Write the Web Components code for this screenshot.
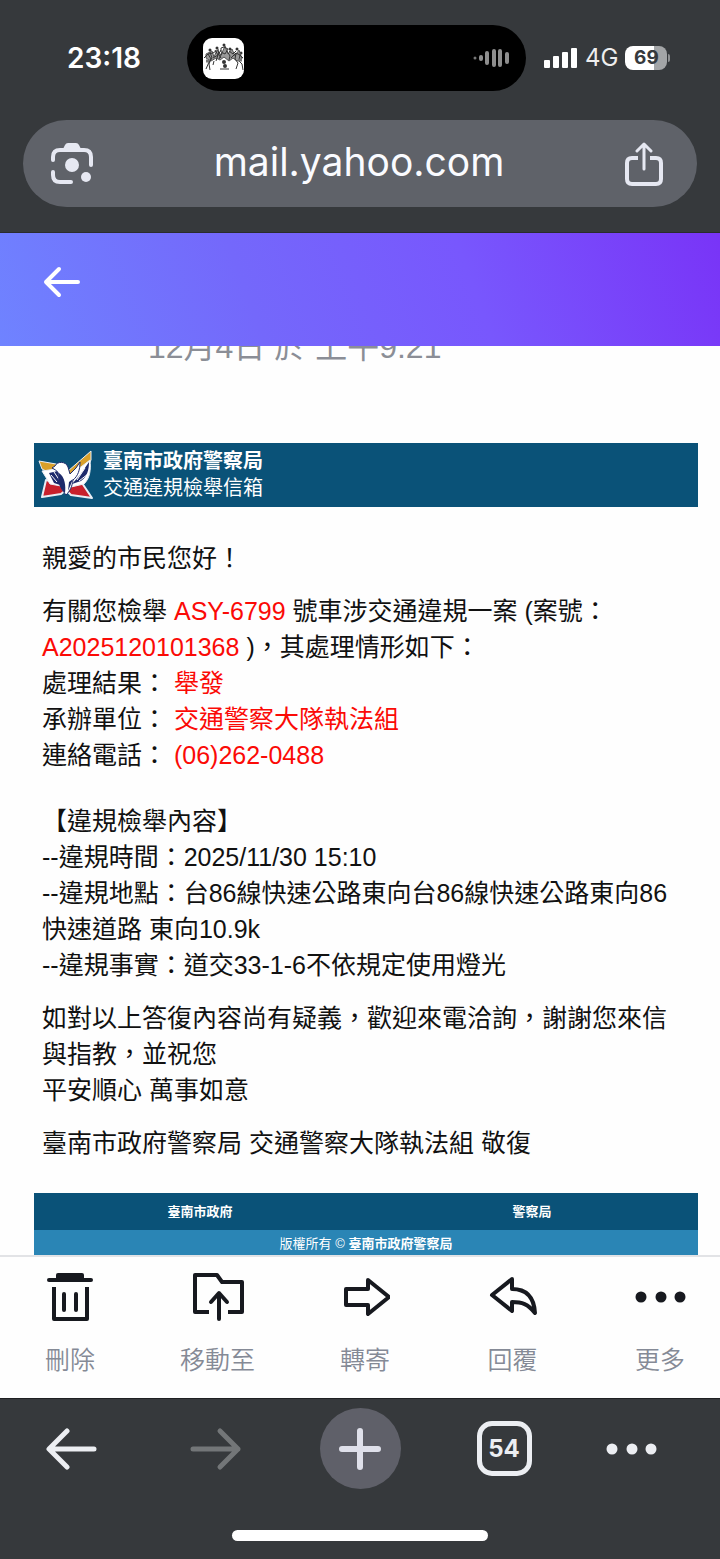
<!DOCTYPE html>
<html lang="zh-Hant">
<head>
<meta charset="utf-8">
<meta name="viewport" content="width=device-width, initial-scale=1">
<title>mail.yahoo.com</title>
<style>
  body {
    margin: 0;
    min-height: 100vh;
    background: #fff;
    font-family: "Liberation Sans", "Noto Sans CJK TC", sans-serif;
  }
</style>
</head>
<body>
<phone-screen>
  <status-bar slot="top" time="23:18" network="4G" battery="69"></status-bar>
  <address-bar slot="top" url="mail.yahoo.com"></address-bar>
  <mail-header slot="top"></mail-header>

  <mail-message date="12月4日 於 上午9:21">
    <letter-head slot="head">
      臺南市政府警察局
      <span slot="sub">交通違規檢舉信箱</span>
    </letter-head>
    <case-report></case-report>
    <letter-foot slot="foot"></letter-foot>
  </mail-message>

  <mail-toolbar slot="bottom">
    <mail-action icon="trash">刪除</mail-action>
    <mail-action icon="move">移動至</mail-action>
    <mail-action icon="forward">轉寄</mail-action>
    <mail-action icon="reply">回覆</mail-action>
    <mail-action icon="more">更多</mail-action>
  </mail-toolbar>
  <browser-toolbar slot="bottom" tabs="54"></browser-toolbar>
</phone-screen>

<script>
// 共用的圖示
const ICONS = {
  lens: `<svg width="42" height="42" viewBox="0 0 42 42" fill="none" stroke="currentColor" stroke-width="4" stroke-linecap="round">
    <path d="M2 17v-3q0-7 7-7h24q7 0 7 7v8M2 29v3q0 7 7 7h11"/>
    <path d="M12 6l2-4q1-2 3-2h8q2 0 3 2l2 4v2H12z" fill="currentColor" stroke="none"/>
    <circle cx="21" cy="22" r="7" fill="currentColor" stroke="none"/>
    <circle cx="35" cy="34" r="5" fill="currentColor" stroke="none"/></svg>`,
  share: `<svg width="38" height="44" viewBox="0 0 38 44" fill="none" stroke="currentColor" stroke-width="4" stroke-linecap="round" stroke-linejoin="round">
    <path d="M13 16H7q-5 0-5 5v16q0 5 5 5h24q5 0 5-5V21q0-5-5-5h-6" stroke-linecap="butt"/>
    <path d="M19 27V3M12 9l7-7 7 7" stroke-width="3"/></svg>`,
  back: `<svg width="38" height="32" viewBox="0 0 38 32" fill="none" stroke="currentColor" stroke-width="4" stroke-linecap="round" stroke-linejoin="round">
    <path d="M35 16H3M16 3L3 16l13 13"/></svg>`,
  trash: `<svg width="48" height="52" viewBox="0 0 48 52" fill="none" stroke="currentColor" stroke-width="4" stroke-linecap="round">
    <path d="M3 9h42"/><path d="M10 9V4q0-2 2-2h24q2 0 2 2v5z" fill="currentColor" stroke="none"/>
    <path d="M8 16v32h33V16" stroke-linecap="butt" stroke-linejoin="round"/><path d="M18 23v16M30 23v16"/></svg>`,
  move: `<svg width="54" height="52" viewBox="0 0 54 52" fill="none" stroke="currentColor" stroke-width="4" stroke-linecap="round" stroke-linejoin="round">
    <path d="M18 41H4V4h22l5 7h20v30H37" stroke-linecap="butt"/><path d="M28 48V24M20 31l8-9 8 9"/></svg>`,
  forward: `<svg width="50" height="52" viewBox="0 0 50 52" fill="none" stroke="currentColor" stroke-width="4" stroke-linejoin="round">
    <path d="M6 18h22V9l21 17-21 17v-9H6z"/></svg>`,
  reply: `<svg width="50" height="52" viewBox="0 0 50 52" fill="none" stroke="currentColor" stroke-width="4" stroke-linejoin="round">
    <path d="M24 8L4 24l20 16V31c10 0 16 2 23 11C46 26 38 18 24 18z"/></svg>`,
  more: `<svg width="52" height="52" viewBox="0 0 52 52" fill="currentColor">
    <circle cx="7" cy="26" r="5.5"/><circle cx="27" cy="26" r="5.5"/><circle cx="46" cy="26" r="5.5"/></svg>`,
  navBack: `<svg width="52" height="44" viewBox="0 0 52 44" fill="none" stroke="currentColor" stroke-width="5" stroke-linecap="round" stroke-linejoin="round">
    <path d="M48 22H4M21 4L3 22l18 18"/></svg>`,
  navForward: `<svg width="52" height="44" viewBox="0 0 52 44" fill="none" stroke="currentColor" stroke-width="5" stroke-linecap="round" stroke-linejoin="round">
    <path d="M3 22h45M30 4l18 18-18 18"/></svg>`,
  plus: `<svg width="44" height="44" viewBox="0 0 44 44" fill="none" stroke="currentColor" stroke-width="6" stroke-linecap="round">
    <path d="M22 4v36M4 22h36"/></svg>`,
  dots: `<svg width="52" height="12" viewBox="0 0 52 12" fill="currentColor">
    <circle cx="6" cy="6" r="5.5"/><circle cx="26" cy="6" r="5.5"/><circle cx="45" cy="6" r="5.5"/></svg>`,
  wave: `<svg width="38" height="20" viewBox="0 0 38 20" stroke="#8e8e8e" stroke-width="4" stroke-linecap="round">
    <path d="M3 10h0" stroke="#777" stroke-width="3"/><path d="M9 9v2M15 5v10M22 3v14M28 3v14M35 6v8"/></svg>`,
  signal: `<svg width="34" height="22" viewBox="0 0 34 22" fill="#fff">
    <rect x="0" y="13" width="6" height="8" rx="1"/><rect x="9" y="9" width="6" height="12" rx="1"/>
    <rect x="18" y="5" width="6" height="16" rx="1"/><rect x="27" y="1" width="6" height="20" rx="1"/></svg>`,
  crowd: `<svg width="41" height="41" viewBox="0 0 41 41" fill="none" stroke="#333" stroke-width="1">
    <g fill="#333" stroke="none"><circle cx="7" cy="12" r="1.5"/><circle cx="14" cy="10" r="1.5"/><circle cx="21" cy="7" r="1.5"/>
    <circle cx="27" cy="11" r="1.5"/><circle cx="34" cy="11" r="1.5"/><circle cx="38" cy="15" r="1.5"/><circle cx="21" cy="24" r="2"/><circle cx="22" cy="28" r="2"/></g>
    <path d="M3 16l6-3 2 6 3-7 4 5 4-9 3 8 4-5 3 7 4-6 3 9-5 2-4-3-4 3-5-4-4 3-4-2-5 3-5-3z" fill="#999" stroke="#555"/>
    <path d="M17 31h9M1 20l4-4 3 5-2 5 1 6M7 14l2 6-3 4-3 7M5 16l5-1 3-2M12 12l3 5-2 6M15 11l1 6 2 3M10 20l5-3 3-5M18 10l3-1 4 2-3 5-4-2zM19 15l-3 6M24 13l3 5-1 4M26 13l4 3 3-3M28 20l5-5 4 2 3 3M33 15l-1 6 3 4-2 6M37 17l-1 6 3 3 1 6M11 23l-1 4"/>
    <path d="M3 23h3M35 22h4" stroke="#777" stroke-width="3"/></svg>`,
  pigeon: `<svg width="58" height="52" viewBox="0 0 58 52" stroke-linejoin="round">
    <path d="M9 31l16 4 18-4 12 18-21-3-5-5-5 4-19 3z" fill="#c8202c" stroke="#e9eef5" stroke-width="2"/>
    <path d="M2 12l17 3 12 7L54 2v9l-8 15-14 12-19-14-8-4z" fill="#d9a02a" stroke="#e9eef5"/>
    <path d="M5 22l14-2 7 8-2 9-11-2zM53 11c1 10 0 18-6 24l-13 3-2-11 8-6z" fill="#fff" stroke="#e9eef5"/>
    <path d="M12 24l9-2 2 14-6-2zM52 13l-9 13-8 9 9-3c6-4 8-11 8-19z" fill="#1d2a6b"/>
    <path d="M43 17l-7 12M48 19l-8 12M51 25l-9 7M14 26l6 7M17 23l6 9" fill="none" stroke="#fff"/>
    <path d="M18 17c2-5 11-5 13 1l2 7 6-6 4-6c0 8-2 14-7 18-1 7-3 11-7 15-3-4-8-10-7-18 0-4-1-6-7-9z" fill="#fff" stroke="#1d2a6b"/>
    <path d="M22 24c6 4 7 13 6 20-5-5-8-12-6-20zM32 33l4-3-5 12z" fill="#1d2a6b"/></svg>`,
};

const RESET = `
  :host, * { box-sizing: border-box; }
  svg { display: block; }
  button { border: 0; margin: 0; padding: 0; background: none; color: inherit; font: inherit; cursor: pointer; }
`;

// 所有元件的基底：開啟 shadow root 並渲染
class BaseElement extends HTMLElement {
  constructor() {
    super();
    this.attachShadow({ mode: 'open' });
  }

  connectedCallback() {
    this.shadowRoot.innerHTML = `<style>${RESET}${this.styles()}</style>${this.markup()}`;
  }

  styles() { return ''; }
  markup() { return '<slot></slot>'; }
}

class PhoneScreen extends BaseElement {
  styles() {
    return `
      :host { display: flex; flex-direction: column; height: 100vh; }
      main { flex: 1; min-height: 0; overflow: hidden; background: #fefefe; }
    `;
  }

  markup() {
    return `<slot name="top"></slot><main><slot></slot></main><slot name="bottom"></slot>`;
  }
}

class StatusBar extends BaseElement {
  styles() {
    return `
      :host { display: grid; grid-template-columns: 1fr 339px 1fr; align-items: center; padding: 25px 7px 0 0;
              background: #36393c; color: #fff; font-family: Inter, "Noto Sans CJK TC", sans-serif; }
      time { padding-left: 21px; text-align: center; font-size: 28px; font-weight: 600; line-height: 34px; }
      .island { display: flex; align-items: center; justify-content: space-between; height: 66px;
                padding: 0 16px; border-radius: 33px; background: #000; }
      .app { border-radius: 9px; background: #fff; overflow: hidden; }
      .right { display: flex; align-items: center; gap: 7px; padding-left: 18px; }
      .net { font-size: 24px; line-height: 28px; color: #eee; }
      .battery { width: 42px; height: 24px; border-radius: 8px; text-align: center; font-size: 19px; font-weight: 700;
                 line-height: 24px; color: #36393c; background: linear-gradient(90deg, #fff var(--level), #a3a5a7 var(--level)); }
      .cell { display: flex; align-items: center; gap: 1px; }
      .cell::after { content: ""; width: 2px; height: 8px; border-radius: 0 2px 2px 0; background: #8f9193; }
    `;
  }

  markup() {
    const level = this.getAttribute('battery');
    return `
      <time>${this.getAttribute('time')}</time>
      <div class="island"><div class="app">${ICONS.crowd}</div>${ICONS.wave}</div>
      <div class="right">
        ${ICONS.signal}
        <span class="net">${this.getAttribute('network')}</span>
        <span class="cell"><span class="battery" style="--level: ${level}%">${level}</span></span>
      </div>
    `;
  }
}

class AddressBar extends BaseElement {
  styles() {
    return `
      :host { display: block; padding: 29px 23px 25px; background: #36393c; border-bottom: 1px solid #2a2c2e; }
      form { display: flex; align-items: center; height: 87px; padding: 0 34px 0 28px; border-radius: 44px;
             background: #5f6269; color: #e6e8f2; }
      input { flex: 1; min-width: 0; border: 0; padding: 0 0 4px; background: none; outline: 0; color: #fafbff;
              text-align: center; font: 39px/48px Inter, "Noto Sans CJK TC", sans-serif; }
    `;
  }

  markup() {
    return `
      <form>
        <button type="button" aria-label="Lens">${ICONS.lens}</button>
        <input type="text" aria-label="網址" value="${this.getAttribute('url')}">
        <button type="button" aria-label="分享">${ICONS.share}</button>
      </form>
    `;
  }
}

class MailHeader extends BaseElement {
  styles() {
    return `
      :host { display: block; height: 113px; padding: 33px 43px; color: #fff;
              background: linear-gradient(70deg, #6f83ff 0%, #7468fb 35%, #7857fd 65%, #7934f7 100%); }
    `;
  }

  markup() {
    return `<button type="button" aria-label="返回">${ICONS.back}</button>`;
  }
}

class MailMessage extends BaseElement {
  styles() {
    return `
      /* 信件已向上捲動，日期只露出下半部 */
      :host { display: block; margin-top: -23px; padding: 0 22px 0 34px; }
      time { display: block; padding-left: 114px; font-size: 32px; line-height: 48px; color: #8b8e96; }
      article { margin-top: 72px; color: #111; }
    `;
  }

  markup() {
    return `
      <time>${this.getAttribute('date')}</time>
      <article><slot name="head"></slot><slot></slot><slot name="foot"></slot></article>
    `;
  }
}

class LetterHead extends BaseElement {
  styles() {
    return `
      :host { display: flex; align-items: center; gap: 8px; height: 64px; padding-left: 3px;
              background: #0a5278; color: #fff; font-size: 20px; line-height: 27px; }
      strong, slot { display: block; }
    `;
  }

  markup() {
    return `${ICONS.pigeon}<div><strong><slot></slot></strong><slot name="sub"></slot></div>`;
  }
}

class CaseReport extends BaseElement {
  styles() {
    return `
      :host { display: block; padding: 33px 8px 32px; font-size: 25px; line-height: 36px; text-spacing-trim: space-all; }
      p { margin: 0 0 17px; }
      p:last-child { margin: 0; }
      p.case { margin-bottom: 30px; }
      em { font-style: normal; color: #fb0a06; }
    `;
  }

  markup() {
    return `
      <p>親愛的市民您好！</p>
      <p class="case">有關您檢舉 <em>ASY-6799</em> 號車涉交通違規一案 (案號：<em>A2025120101368</em> )，其處理情形如下：<br>
        處理結果： <em>舉發</em><br>
        承辦單位： <em>交通警察大隊執法組</em><br>
        連絡電話： <em>(06)262-0488</em></p>
      <p>【違規檢舉內容】<br>
        --違規時間：2025/11/30 15:10<br>
        --違規地點：台86線快速公路東向台86線快速公路東向86快速道路 東向10.9k<br>
        --違規事實：道交33-1-6不依規定使用燈光</p>
      <p>如對以上答復內容尚有疑義，歡迎來電洽詢，謝謝您來信與指教，並祝您<br>平安順心 萬事如意</p>
      <p>臺南市政府警察局 交通警察大隊執法組 敬復</p>
    `;
  }
}

class LetterFoot extends BaseElement {
  styles() {
    return `
      :host { display: block; color: #fff; font-size: 13px; text-align: center; }
      nav { display: grid; grid-template-columns: 1fr 1fr; line-height: 37px; background: #0a5278; }
      a { color: inherit; font-weight: 700; text-decoration: none; }
      .copy { line-height: 28px; background: #2a85b5; }
    `;
  }

  markup() {
    return `
      <nav><a href="#tainan">臺南市政府</a><a href="#police">警察局</a></nav>
      <div class="copy">版權所有 © <a href="#police">臺南市政府警察局</a></div>
    `;
  }
}

class MailToolbar extends BaseElement {
  styles() {
    return `
      :host { display: flex; justify-content: space-between; height: 143px; padding: 14px 10px 0 20px;
              border-top: 2px solid #e2e3e6; background: #fefefe; }
    `;
  }
}

class MailAction extends BaseElement {
  styles() {
    return `
      :host { display: block; width: 100px; }
      button { display: flex; flex-direction: column; align-items: center; gap: 19px; width: 100%;
               color: #17191f; font-size: 25px; line-height: 36px; }
      span { color: #858a96; font-weight: 350; }
    `;
  }

  markup() {
    return `<button type="button">${ICONS[this.getAttribute('icon')]}<span><slot></slot></span></button>`;
  }
}

class BrowserToolbar extends BaseElement {
  styles() {
    return `
      :host { display: block; height: 161px; padding-top: 9px; border-top: 1px solid #1e2022; background: #36393c; color: #eceef2; }
      nav { display: grid; grid-template-columns: repeat(5, 1fr); align-items: center; justify-items: center; height: 81px; }
      button:disabled { color: #737678; }
      .new { display: grid; place-items: center; width: 81px; height: 81px; border-radius: 50%; background: #5f6069; color: #dfe0ea; }
      .tabs { width: 55px; height: 55px; border: 5px solid; border-radius: 15px; font: 700 24px/44px Inter, sans-serif; }
      .menu { margin-right: 32px; }
      .home { width: 256px; height: 11px; margin: 41px auto 0; border-radius: 6px; background: #fff; }
    `;
  }

  markup() {
    return `
      <nav>
        <button type="button" aria-label="上一頁">${ICONS.navBack}</button>
        <button type="button" aria-label="下一頁" disabled>${ICONS.navForward}</button>
        <button type="button" class="new" aria-label="新分頁">${ICONS.plus}</button>
        <button type="button" class="tabs">${this.getAttribute('tabs')}</button>
        <button type="button" class="menu" aria-label="選單">${ICONS.dots}</button>
      </nav>
      <div class="home"></div>
    `;
  }
}

customElements.define('phone-screen', PhoneScreen);
customElements.define('status-bar', StatusBar);
customElements.define('address-bar', AddressBar);
customElements.define('mail-header', MailHeader);
customElements.define('mail-message', MailMessage);
customElements.define('letter-head', LetterHead);
customElements.define('case-report', CaseReport);
customElements.define('letter-foot', LetterFoot);
customElements.define('mail-toolbar', MailToolbar);
customElements.define('mail-action', MailAction);
customElements.define('browser-toolbar', BrowserToolbar);
</script>
</body>
</html>
